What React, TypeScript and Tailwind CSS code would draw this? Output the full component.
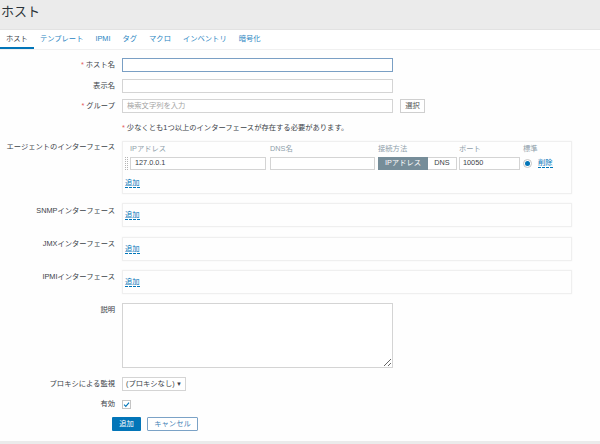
const tabs = ["ホスト", "テンプレート", "IPMI", "タグ", "マクロ", "インベントリ", "暗号化"];

function Add({ label = "追加" }: { label?: string }) {
  return (
    <span className="border-b border-dashed border-[#0275b8] leading-[9px] text-[#0275b8]">{label}</span>
  );
}

function Label({ text, required, className = "" }: { text: string; required?: boolean; className?: string }) {
  return (
    <div className={`w-[115px] shrink-0 text-right leading-[12px] ${className}`}>
      {required && <span className="mr-[2px] text-[#e45959]">*</span>}
      {text}
    </div>
  );
}

function EmptyBox() {
  return (
    <div className="ml-[7px] flex h-[24px] w-[450px] items-center border border-[#efefef] pl-[2px] shadow-[0_0_2px_rgba(0,0,0,0.04)]">
      <Add />
    </div>
  );
}

export default function App() {
  return (
    <div className="flex h-[444px] w-[600px] flex-col bg-white font-['Liberation_Sans','Noto_Sans_CJK_JP',sans-serif] text-[7.3px] text-[#3b4248]">
      <div className="h-[29px] shrink-0 bg-[#ebebeb] pl-[1px] text-[13px] leading-[23px] text-[#2b3338]">ホスト</div>

      <div className="flex h-[20px] shrink-0 border-t border-[#e2e2e2] bg-white">
        {tabs.map((t, i) => (
          <div
            key={t}
            className={
              i === 0
                ? "flex items-center border-b-2 border-[#0275b8] px-[6px] pt-[2px] text-[#3b4248]"
                : "flex items-center border-b-2 border-transparent px-[6px] pt-[2px] text-[#2a85c2]"
            }>
            {t}
          </div>
        ))}
      </div>

      <div className="flex flex-1 flex-col border-t border-[#f0f0f0] bg-[#fefefe]">
        <div className="mt-[8px] flex items-center">
          <Label text="ホスト名" required />
          <div className="ml-[7px] h-[14px] w-[271px] border border-[#7a9fc4] bg-white" />
        </div>
        <div className="mt-[7px] flex items-center">
          <Label text="表示名" />
          <div className="ml-[7px] h-[14px] w-[271px] border border-[#d4d4d4] bg-white" />
        </div>
        <div className="mt-[6px] flex items-center">
          <Label text="グループ" required />
          <div className="ml-[7px] flex h-[14px] w-[271px] items-center border border-[#d4d4d4] bg-white px-[4px] text-[#a3a3a3]">
            検索文字列を入力
          </div>
          <div className="ml-[7px] flex h-[14px] w-[25px] items-center justify-center border border-[#cfcfcf] bg-white text-[#555]">
            選択
          </div>
        </div>
        <div className="mt-[9px] flex leading-[12px]">
          <div className="ml-[122px]">
            <span className="mr-[2px] text-[#e45959]">*</span>少なくとも1つ以上のインターフェースが存在する必要があります。
          </div>
        </div>

        <div className="mt-[7px] flex items-start">
          <Label text="エージェントのインターフェース" />
          <div className="ml-[7px] w-[450px] border border-[#efefef] pb-[4px] pl-[2px] pt-[1px] shadow-[0_0_2px_rgba(0,0,0,0.04)]">
            <div className="flex h-[12px] items-center leading-[12px] text-[#8fa0aa]">
              <span className="ml-[5px] w-[140px]">IPアドレス</span>
              <span className="w-[108px]">DNS名</span>
              <span className="w-[81px]">接続方法</span>
              <span className="w-[64px]">ポート</span>
              <span>標準</span>
            </div>
            <div className="mt-[2px] flex h-[13px] items-center">
              <div className="mr-[2px] h-[13px] w-[3px] border-x border-dotted border-[#b5b5b5]" />
              <div className="flex h-[13px] w-[136px] items-center border border-[#d4d4d4] bg-white px-[4px]">127.0.0.1</div>
              <div className="ml-[4px] h-[13px] w-[105px] border border-[#d4d4d4] bg-white" />
              <div className="ml-[3px] flex h-[13px]">
                <div className="flex w-[50px] items-center justify-center bg-[#768d99] text-white">IPアドレス</div>
                <div className="flex w-[29px] items-center justify-center border border-l-0 border-[#d4d4d4] bg-white">DNS</div>
              </div>
              <div className="ml-[2px] flex h-[13px] w-[61px] items-center border border-[#d4d4d4] bg-white px-[3px]">10050</div>
              <div className="ml-[3px] flex h-[9px] w-[9px] items-center justify-center rounded-full border border-[#c4c4c4] bg-white">
                <div className="h-[5px] w-[5px] rounded-full bg-[#0275b8]" />
              </div>
              <div className="ml-[6px]">
                <Add label="削除" />
              </div>
            </div>
            <div className="mt-[7px] flex h-[12px] items-center">
              <Add />
            </div>
          </div>
        </div>

        <div className="mt-[9px] flex items-start">
          <Label text="SNMPインターフェース" className="pt-[2px]" />
          <EmptyBox />
        </div>
        <div className="mt-[10px] flex items-start">
          <Label text="JMXインターフェース" className="pt-[1px]" />
          <EmptyBox />
        </div>
        <div className="mt-[9px] flex items-start">
          <Label text="IPMIインターフェース" className="pt-[1px]" />
          <EmptyBox />
        </div>

        <div className="mt-[9px] flex items-start">
          <Label text="説明" className="pt-[1px]" />
          <textarea className="ml-[7px] h-[65px] w-[271px] resize border border-[#d4d4d4] bg-white" />
        </div>

        <div className="mt-[9px] flex items-center">
          <Label text="プロキシによる監視" />
          <div className="ml-[7px] flex h-[14px] w-[64px] items-center justify-between border border-[#d4d4d4] bg-white pl-[3px] pr-[3px]">
            <span>(プロキシなし)</span>
            <span className="text-[6px]">▼</span>
          </div>
        </div>

        <div className="mt-[7px] flex items-center">
          <Label text="有効" />
          <div className="ml-[7px] flex h-[9px] w-[9px] items-center justify-center border border-[#c4c4c4] bg-white">
            <svg viewBox="0 0 10 10" className="h-[7px] w-[7px]">
              <path d="M1.5 5.2 L4 7.6 L8.6 2.4" fill="none" stroke="#0275b8" strokeWidth="1.6" />
            </svg>
          </div>
        </div>

        <div className="ml-[112px] mt-[7px] flex gap-[6px]">
          <div className="flex h-[14px] w-[29px] items-center justify-center rounded-[1px] bg-[#0275b8] text-white">追加</div>
          <div className="flex h-[14px] w-[51px] items-center justify-center rounded-[1px] border border-[#7ba2c6] bg-white text-[#3f7fb5]">
            キャンセル
          </div>
        </div>
      </div>
      <div className="h-[3px] shrink-0 bg-[#ebebeb]" />
    </div>
  );
}
